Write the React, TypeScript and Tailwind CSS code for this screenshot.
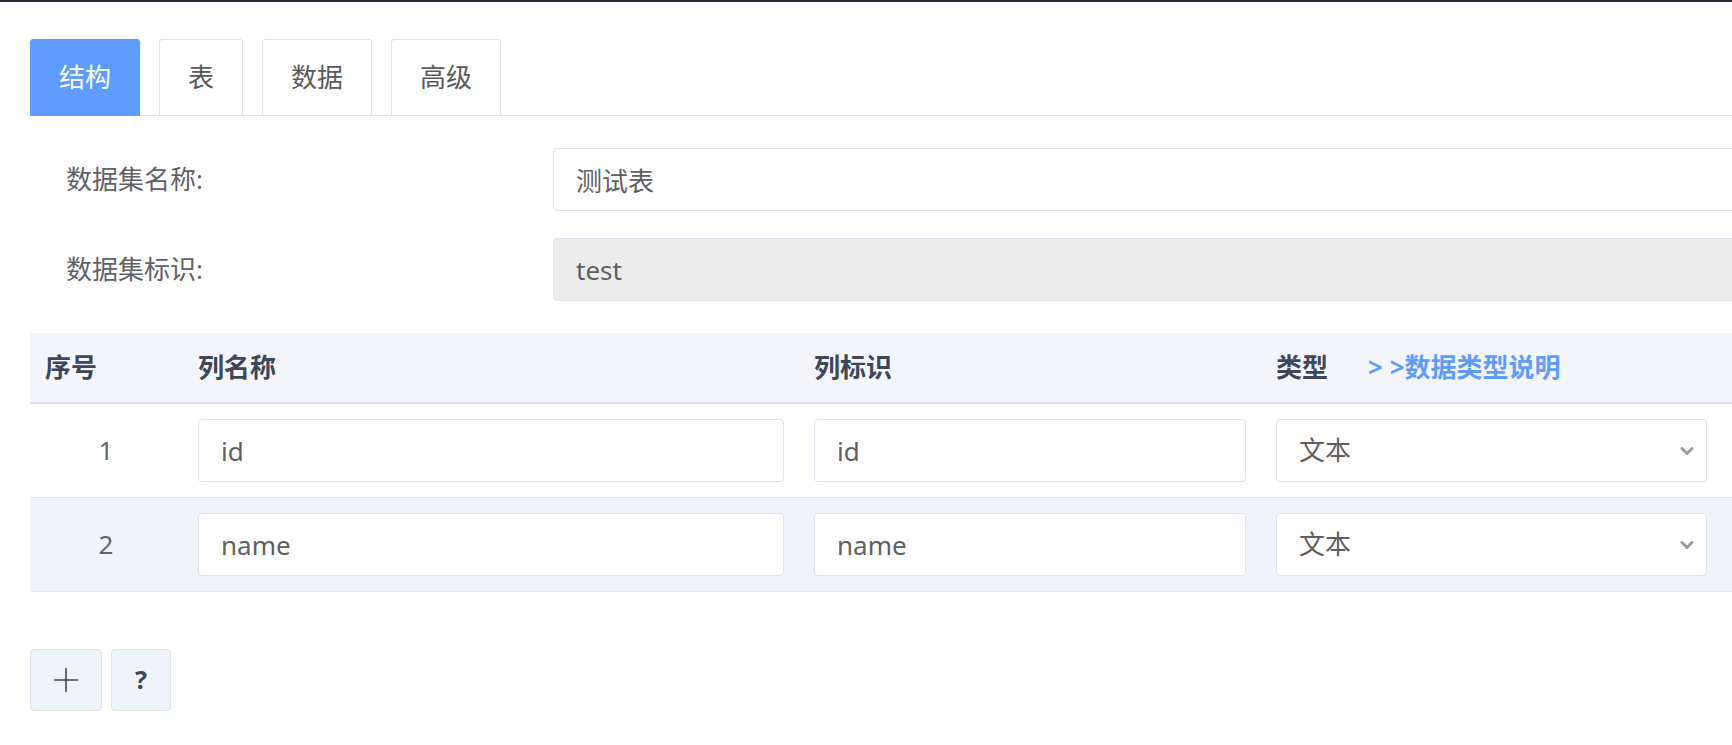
import { useState } from "react";

const font = "font-['Noto_Sans','Noto_Sans_CJK_SC',sans-serif]";

const tabs = ["结构", "表", "数据", "高级"];

const rows = [
  { no: 1, name: "id", key: "id", type: "文本" },
  { no: 2, name: "name", key: "name", type: "文本" },
];

function Chevron() {
  return (
    <svg width="14" height="10" viewBox="0 0 14 10" className="pointer-events-none absolute right-[13px] top-1/2 -translate-y-1/2">
      <path d="M2 2.5 L7 7.5 L12 2.5" fill="none" stroke="#9c9c9c" strokeWidth="3" strokeLinecap="round" strokeLinejoin="round" />
    </svg>
  );
}

export default function App() {
  const [active, setActive] = useState(0);
  const [title, setTitle] = useState("测试表");

  const inputCls =
    "h-[63px] w-full rounded-[4px] border border-[#dfe3ee] bg-white px-[22px] text-[26px] text-[#5f5f5f] outline-none";

  return (
    <div className={`min-h-screen w-full overflow-hidden bg-white ${font}`}>
      <div className="h-[2px] w-full bg-[#262d36]" />

      <div className="pl-[30px] pt-[37px]">
        {/* Tabs */}
        <div className="flex items-end gap-[19px] border-b border-[#dfe3ee]">
          {tabs.map((t, i) => (
            <button
              key={t}
              onClick={() => setActive(i)}
              className={
                "-mb-px h-[77px] rounded-t-[3px] border px-[28px] text-[26px] " +
                (active === i
                  ? "border-[#5e9cff] bg-[#5e9cff] text-white"
                  : "border-[#dfe3ee] bg-white text-[#5a5a5a]")
              }
            >
              {t}
            </button>
          ))}
        </div>

        {/* Form */}
        <div className="mt-[32px] flex flex-col gap-[27px]">
          <div className="flex items-center">
            <label className="w-[523px] shrink-0 pl-[36px] text-[26px] text-[#5f6266]">数据集名称:</label>
            <input
              className={inputCls + " w-[1300px] shrink-0"}
              value={title}
              onChange={e => setTitle(e.target.value)}
            />
          </div>
          <div className="flex items-center">
            <label className="w-[523px] shrink-0 pl-[36px] text-[26px] text-[#5f6266]">数据集标识:</label>
            <input
              disabled
              className="h-[63px] w-[1300px] shrink-0 rounded-[4px] border border-[#dfe3ee] bg-[#ececec] px-[22px] text-[26px] text-[#5f5f5f] outline-none"
              value="test"
              readOnly
            />
          </div>
        </div>

        {/* Table */}
        <div className="mt-[32px] w-full">
          <div className="flex h-[71px] items-center border-b-2 border-[#dfe3ee] bg-[#f3f5fa] text-[26px] font-bold text-[#3d4759]">
            <div className="w-[168px] shrink-0 pl-[15px]">序号</div>
            <div className="w-[616px] shrink-0">列名称</div>
            <div className="w-[462px] shrink-0">列标识</div>
            <div className="flex shrink-0 items-center gap-[40px]">
              <span>类型</span>
              <a href="#" className="text-[#5e9cff]">&gt;&nbsp;&gt;数据类型说明</a>
            </div>
          </div>

          {rows.map((r, i) => (
            <div
              key={r.no}
              className={
                "flex h-[94px] items-center border-b border-[#e3e7f0] " +
                (i % 2 === 1 ? "bg-[#eef3fc]" : "bg-white")
              }
            >
              <div className="w-[168px] shrink-0 pr-[16px] text-center text-[26px] text-[#666666]">{r.no}</div>
              <div className="w-[616px] shrink-0 pr-[30px]">
                <input className={inputCls} defaultValue={r.name} />
              </div>
              <div className="w-[462px] shrink-0 pr-[30px]">
                <input className={inputCls} defaultValue={r.key} />
              </div>
              <div className="relative w-[431px] shrink-0">
                <select
                  defaultValue={r.type}
                  className="h-[63px] w-full appearance-none rounded-[4px] border border-[#dfe3ee] bg-white px-[22px] text-[26px] text-[#5f5f5f] outline-none"
                >
                  <option>文本</option>
                  <option>数字</option>
                  <option>日期</option>
                </select>
                <Chevron />
              </div>
            </div>
          ))}
        </div>

        {/* Actions */}
        <div className="mt-[57px] flex gap-[9px]">
          <button className="flex h-[62px] w-[72px] items-center justify-center rounded-[4px] border border-[#dfe3ee] bg-[#eef3fc]">
            <svg width="26" height="26" viewBox="0 0 26 26">
              <path d="M13 1 V25 M1 13 H25" stroke="#3d4759" strokeWidth="1.6" />
            </svg>
          </button>
          <button className="flex h-[62px] w-[60px] items-center justify-center rounded-[4px] border border-[#dfe3ee] bg-[#eef3fc] text-[25px] font-bold text-[#3d4759]">
            ?
          </button>
        </div>
      </div>
    </div>
  );
}
